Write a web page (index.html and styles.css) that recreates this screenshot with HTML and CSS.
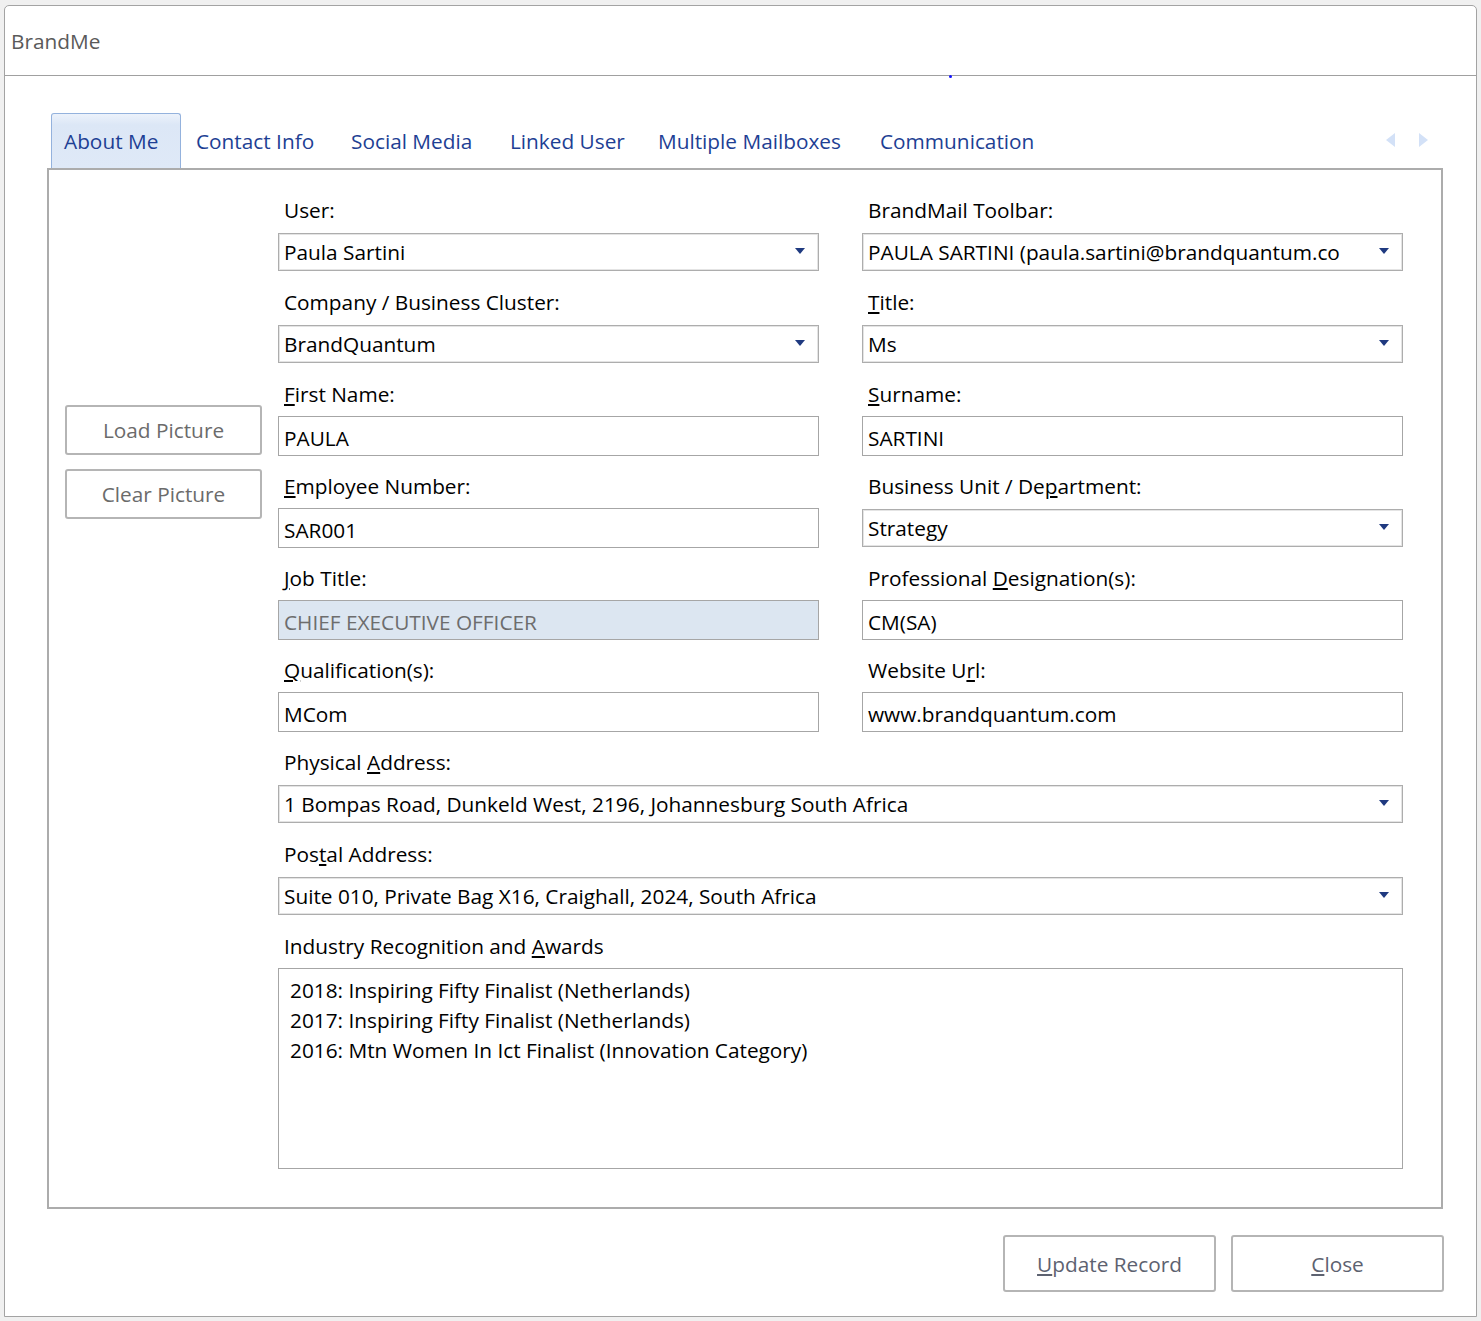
FILE: index.html
```html
<!DOCTYPE html>
<html>
<head>
<meta charset="utf-8">
<title>BrandMe</title>
<link rel="stylesheet" href="styles.css">
</head>
<body>
<div class="window">
  <div class="titlebar">BrandMe</div>
  <span class="focus-dot"></span>
  <div class="content">
    <div class="tabs">
      <div class="tab active">About Me</div>
      <div class="tab">Contact Info</div>
      <div class="tab">Social Media</div>
      <div class="tab">Linked User</div>
      <div class="tab">Multiple Mailboxes</div>
      <div class="tab">Communication</div>
      <div class="tab-arrows">
        <svg width="9" height="14" viewBox="0 0 9 14"><path d="M9 0 L0 7 L9 14 Z" fill="#d3e1f7"/></svg>
        <svg width="9" height="14" viewBox="0 0 9 14"><path d="M0 0 L9 7 L0 14 Z" fill="#d3e1f7"/></svg>
      </div>
    </div>
    <div class="panel">
      <div class="pic-col">
        <button class="btn">Load Picture</button>
        <button class="btn">Clear Picture</button>
      </div>
      <div class="form">
        <div class="field">
          <div class="label">User:</div>
          <div class="combo"><span class="val">Paula Sartini</span><svg class="arrow" width="10" height="6" viewBox="0 0 10 6"><path d="M0 0 H10 L5 6 Z" fill="#1f3a80"/></svg></div>
        </div>
        <div class="field">
          <div class="label">BrandMail Toolbar:</div>
          <div class="combo"><span class="val">PAULA SARTINI (paula.sartini@brandquantum.co</span><svg class="arrow" width="10" height="6" viewBox="0 0 10 6"><path d="M0 0 H10 L5 6 Z" fill="#1f3a80"/></svg></div>
        </div>
        <div class="field">
          <div class="label">Company / Business Cluster:</div>
          <div class="combo"><span class="val">BrandQuantum</span><svg class="arrow" width="10" height="6" viewBox="0 0 10 6"><path d="M0 0 H10 L5 6 Z" fill="#1f3a80"/></svg></div>
        </div>
        <div class="field">
          <div class="label"><u>T</u>itle:</div>
          <div class="combo"><span class="val">Ms</span><svg class="arrow" width="10" height="6" viewBox="0 0 10 6"><path d="M0 0 H10 L5 6 Z" fill="#1f3a80"/></svg></div>
        </div>
        <div class="field">
          <div class="label"><u>F</u>irst Name:</div>
          <div class="input">PAULA</div>
        </div>
        <div class="field">
          <div class="label"><u>S</u>urname:</div>
          <div class="input">SARTINI</div>
        </div>
        <div class="field">
          <div class="label"><u>E</u>mployee Number:</div>
          <div class="input">SAR001</div>
        </div>
        <div class="field">
          <div class="label">Business Unit / De<u>p</u>artment:</div>
          <div class="combo"><span class="val">Strategy</span><svg class="arrow" width="10" height="6" viewBox="0 0 10 6"><path d="M0 0 H10 L5 6 Z" fill="#1f3a80"/></svg></div>
        </div>
        <div class="field">
          <div class="label"><u>J</u>ob Title:</div>
          <div class="input disabled">CHIEF EXECUTIVE OFFICER</div>
        </div>
        <div class="field">
          <div class="label">Professional <u>D</u>esignation(s):</div>
          <div class="input">CM(SA)</div>
        </div>
        <div class="field">
          <div class="label"><u>Q</u>ualification(s):</div>
          <div class="input">MCom</div>
        </div>
        <div class="field">
          <div class="label">Website U<u>r</u>l:</div>
          <div class="input">www.brandquantum.com</div>
        </div>
        <div class="field wide">
          <div class="label">Physical <u>A</u>ddress:</div>
          <div class="combo"><span class="val">1 Bompas Road, Dunkeld West, 2196, Johannesburg South Africa</span><svg class="arrow" width="10" height="6" viewBox="0 0 10 6"><path d="M0 0 H10 L5 6 Z" fill="#1f3a80"/></svg></div>
        </div>
        <div class="field wide">
          <div class="label">Pos<u>t</u>al Address:</div>
          <div class="combo"><span class="val">Suite 010, Private Bag X16, Craighall, 2024, South Africa</span><svg class="arrow" width="10" height="6" viewBox="0 0 10 6"><path d="M0 0 H10 L5 6 Z" fill="#1f3a80"/></svg></div>
        </div>
        <div class="field wide">
          <div class="label">Industry Recognition and <u>A</u>wards</div>
          <div class="textarea">
            <div>2018: Inspiring Fifty Finalist (Netherlands)</div>
            <div>2017: Inspiring Fifty Finalist (Netherlands)</div>
            <div>2016: Mtn Women In Ict Finalist (Innovation Category)</div>
          </div>
        </div>
      </div>
    </div>
    <div class="actions">
      <button class="btn big"><u>U</u>pdate Record</button>
      <button class="btn big"><u>C</u>lose</button>
    </div>
  </div>
</div>
</body>
</html>
```

FILE: styles.css
```css
* { box-sizing: border-box; }

body {
  margin: 0;
  background: #f0f0f0;
  font-family: "Open Sans", "Noto Sans", sans-serif;
  font-size: 20.8px;
  color: #000;
}

.window {
  position: relative;
  margin: 5px 0 0 4px;
  width: 1473px;
  height: 1312px;
  background: #fff;
  border: 1px solid #a3a3a3;
  border-radius: 5px 5px 0 0;
}

.titlebar {
  height: 70px;
  border-bottom: 1px solid #a0a0a0;
  padding-left: 6px;
  display: flex;
  align-items: center;
  color: #5a5a5a;
  font-size: 20.8px;
}

.focus-dot {
  position: absolute;
  left: 944px;
  top: 69px;
  width: 3px;
  height: 3px;
  border-radius: 50%;
  background: #1010ff;
}

.content {
  padding: 37px 33px 0 42px;
}

.tabs {
  display: flex;
  height: 55px;
  padding-left: 4px;
}

.tab {
  display: flex;
  align-items: center;
  padding-left: 15px;
  color: #1e3f94;
  white-space: nowrap;
}

.tab.active {
  width: 130px;
  padding-left: 12px;
  border: 1px solid #94b2dd;
  border-bottom: none;
  border-radius: 3px 3px 0 0;
  background: linear-gradient(#ecf2fb, #dce7f6 20%, #dfe9f7);
}

.tab:nth-child(2) { width: 155px; }
.tab:nth-child(3) { width: 159px; }
.tab:nth-child(4) { width: 148px; }
.tab:nth-child(5) { width: 222px; }

.tab-arrows {
  margin-left: auto;
  display: flex;
  align-items: center;
  gap: 24px;
  padding-right: 15px;
  padding-bottom: 2px;
}

.panel {
  display: flex;
  gap: 16px;
  height: 1041px;
  border: 2px solid #acacac;
  padding: 25px 38px 0 16px;
}

.pic-col {
  width: 197px;
  flex: none;
  padding-top: 210px;
  display: flex;
  flex-direction: column;
  gap: 14px;
}

.btn {
  height: 50px;
  border: 2px solid #b5b5b5;
  border-radius: 3px;
  background: #fff;
  color: #6b6b6b;
  font: inherit;
  padding: 0;
}

.form {
  width: 1125px;
  display: grid;
  grid-template-columns: 541px 541px;
  column-gap: 43px;
  row-gap: 15px;
  align-content: start;
}

.field {
  display: flex;
  flex-direction: column;
}

.wide { grid-column: 1 / -1; }

.label {
  height: 30px;
  line-height: 30px;
  padding-left: 6px;
  margin-bottom: 7px;
  white-space: nowrap;
}

.input {
  height: 40px;
  border: 1px solid #a6a6a6;
  padding: 3px 5px 0;
  display: flex;
  align-items: center;
  white-space: nowrap;
  overflow: hidden;
}

.input.disabled {
  background: #dce6f1;
  color: #6d6d6d;
}

.combo {
  height: 38px;
  margin: 1px 0;
  border: 1px solid #adadad;
  box-shadow: inset 0 0 0 1px #e4e4e4;
  display: flex;
  align-items: center;
  padding: 0 13px 0 5px;
}

.combo .val {
  flex: 1;
  white-space: nowrap;
  overflow: hidden;
  margin-right: 24px;
}

.combo .arrow {
  flex: none;
  margin-top: -2px;
}

.textarea {
  height: 201px;
  border: 1px solid #a6a6a6;
  padding: 6px 11px;
  line-height: 30px;
}

.actions {
  display: flex;
  justify-content: flex-end;
  gap: 15px;
  margin-top: 26px;
  margin-right: -1px;
}

.btn.big {
  width: 213px;
  height: 57px;
  color: #5d6270;
}
```
